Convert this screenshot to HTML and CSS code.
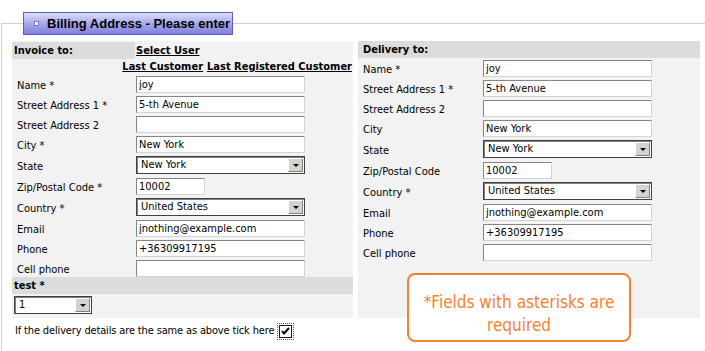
FILE: index.html
```html
<!DOCTYPE html>
<html lang="en">
<head>
<meta charset="utf-8">
<title>Billing Address</title>
<link rel="stylesheet" href="styles.css">
</head>
<body>
<fieldset class="billing">
  <legend class="legend"><span class="legend-icon"></span>Billing Address - Please enter</legend>
  <div class="columns">
    <section class="panel invoice">
      <div class="head-row">
        <span class="head-cell">Invoice to:</span>
        <a class="link" href="#">Select User</a>
      </div>
      <div class="links-row">
        <a class="link" href="#">Last Customer</a>
        <a class="link" href="#">Last Registered Customer</a>
      </div>
      <div class="form">
        <label class="lbl">Name *</label><span class="field"><input class="txt" value="joy"></span>
        <label class="lbl">Street Address 1 *</label><span class="field"><input class="txt" value="5-th Avenue"></span>
        <label class="lbl">Street Address 2</label><span class="field"><input class="txt" value=""></span>
        <label class="lbl">City *</label><span class="field"><input class="txt" value="New York"></span>
        <label class="lbl sel-row">State</label><span class="field sel-row"><span class="select"><span class="sel-text">New York</span><span class="sel-btn"><span class="arrow"></span></span></span></span>
        <label class="lbl">Zip/Postal Code *</label><span class="field"><input class="txt zip" value="10002"></span>
        <label class="lbl sel-row">Country *</label><span class="field sel-row"><span class="select"><span class="sel-text">United States</span><span class="sel-btn"><span class="arrow"></span></span></span></span>
        <label class="lbl">Email</label><span class="field"><input class="txt" value="jnothing@example.com"></span>
        <label class="lbl">Phone</label><span class="field"><input class="txt" value="+36309917195"></span>
        <label class="lbl last">Cell phone</label><span class="field last"><input class="txt" value=""></span>
      </div>
      <div class="test-head">test *</div>
      <div class="test-row">
        <span class="select small"><span class="sel-text">1</span><span class="sel-btn"><span class="arrow"></span></span></span>
      </div>
    </section>
    <section class="panel delivery">
      <div class="delivery-head">Delivery to:</div>
      <div class="form right">
        <label class="lbl">Name *</label><span class="field"><input class="txt" value="joy"></span>
        <label class="lbl">Street Address 1 *</label><span class="field"><input class="txt" value="5-th Avenue"></span>
        <label class="lbl">Street Address 2</label><span class="field"><input class="txt" value=""></span>
        <label class="lbl">City</label><span class="field"><input class="txt" value="New York"></span>
        <label class="lbl sel-row">State</label><span class="field sel-row"><span class="select"><span class="sel-text">New York</span><span class="sel-btn"><span class="arrow"></span></span></span></span>
        <label class="lbl">Zip/Postal Code</label><span class="field"><input class="txt zip" value="10002"></span>
        <label class="lbl sel-row">Country *</label><span class="field sel-row"><span class="select"><span class="sel-text">United States</span><span class="sel-btn"><span class="arrow"></span></span></span></span>
        <label class="lbl">Email</label><span class="field"><input class="txt" value="jnothing@example.com"></span>
        <label class="lbl">Phone</label><span class="field"><input class="txt" value="+36309917195"></span>
        <label class="lbl">Cell phone</label><span class="field"><input class="txt" value=""></span>
      </div>
      <div class="notice">*Fields with asterisks are required</div>
    </section>
  </div>
  <p class="same-row">If the delivery details are the same as above tick here <span class="checkbox"><svg width="9" height="9" viewBox="0 0 9 9"><path d="M1 4 L3 6.5 L8 1" fill="none" stroke="#000" stroke-width="2"/></svg></span></p>
</fieldset>
</body>
</html>
```
FILE: styles.css
```css
html, body {
  margin: 0;
  padding: 0;
  overflow: hidden;
  background: #fff;
}
body {
  font-family: "DejaVu Sans Condensed", "DejaVu Sans", sans-serif;
  font-size: 11px;
  color: #000;
}
.billing {
  margin: 12px 0 0 1px;
  padding: 6px 10px 16px 10px;
  border: 1px solid #cfcfcf;
  width: 720px;
  box-sizing: border-box;
}
.legend {
  margin-left: 11px;
  width: 210px;
  height: 23px;
  box-sizing: border-box;
  padding: 0 0 0 10px;
  border: 1px solid #5c5cc4;
  background: linear-gradient(#dedef8, #a8a8ec 50%, #8080dc);
  font-family: "Liberation Sans", Arial, sans-serif;
  font-weight: bold;
  font-size: 13px;
  line-height: 21px;
  display: flex;
  align-items: center;
}
.legend-icon {
  width: 3px;
  height: 3px;
  border: 1px solid #7c7cd8;
  background: #fff;
  margin-right: 8px;
}
.columns {
  display: grid;
  grid-template-columns: 341px 342px;
  column-gap: 5px;
  align-items: stretch;
}
.panel {
  background: #f2f2f2;
  position: relative;
  padding-bottom: 4px;
}
.head-row {
  display: flex;
  height: 17px;
  align-items: center;
  margin-top: 1px;
}
.head-cell {
  width: 121px;
  height: 17px;
  background: #dcdcdc;
  font-weight: bold;
  padding-left: 2px;
  line-height: 17px;
}
.link {
  color: #000;
  font-weight: bold;
  text-decoration: underline;
}
.head-row .link {
  margin-left: 1px;
}
.links-row {
  display: flex;
  justify-content: flex-end;
  gap: 4px;
  height: 16px;
  line-height: 16px;
  padding-right: 1px;
}
.form {
  display: grid;
  grid-template-columns: 124px 169px;
  grid-template-rows: 20px 20px 20px 20px 22px 20px 22px 20px 20px 18px;
}
.form.right {
  grid-template-columns: 125px 169px;
  grid-template-rows: 20px 20px 20px 20px 22px 20px 22px 20px 20px 20px;
}
.lbl {
  padding-left: 5px;
  line-height: 21px;
}
.field {
  padding-top: 1px;
}
.lbl.sel-row {
  line-height: 23px;
}
.txt {
  display: block;
  width: 169px;
  height: 17px;
  box-sizing: border-box;
  margin: 0;
  padding: 0 2px;
  border: 1px solid;
  border-color: #858585 #d6d3ce #d6d3ce #858585;
  background: #fff;
  font-family: inherit;
  font-size: 11px;
  color: #000;
  outline: none;
}
.txt.zip {
  width: 69px;
}
.select {
  display: flex;
  width: 169px;
  height: 18px;
  box-sizing: border-box;
  border: 1px solid #404040;
  box-shadow: inset 1px 1px 0 #808080;
  background: #fff;
  align-items: stretch;
}
.sel-text {
  flex: 1;
  padding-left: 4px;
  line-height: 16px;
}
.sel-btn {
  width: 15px;
  margin: 1px;
  box-sizing: border-box;
  background: #d6d3ce;
  border: 1px solid;
  border-color: #fff #808080 #808080 #fff;
  display: flex;
  align-items: center;
  justify-content: center;
}
.arrow {
  width: 0;
  height: 0;
  border-left: 3px solid transparent;
  border-right: 3px solid transparent;
  border-top: 3px solid #000;
  margin-top: 1px;
}
.select.small {
  width: 78px;
}
.test-head {
  height: 17px;
  line-height: 17px;
  background: #dcdcdc;
  font-weight: bold;
  padding-left: 2px;
}
.test-row {
  padding: 2px 0 0 2px;
}
.delivery-head {
  height: 17px;
  line-height: 17px;
  background: #dcdcdc;
  font-weight: bold;
  padding-left: 5px;
  margin-bottom: 1px;
}
.notice {
  position: absolute;
  left: 49px;
  top: 232px;
  width: 224px;
  height: 69px;
  box-sizing: border-box;
  border: 2px solid #f7812f;
  border-radius: 8px;
  color: #f7812f;
  font-size: 17px;
  line-height: 23px;
  text-align: center;
  padding: 16px 8px 0;
  background: #fff;
}
.same-row {
  margin: 6px 0 0 3px;
  display: flex;
  align-items: center;
  gap: 5px;
  line-height: 14px;
  letter-spacing: -0.15px;
}
.checkbox {
  width: 11px;
  height: 11px;
  border: 1px solid #1c1c1c;
  background: #fff;
  outline: 1px dotted #555;
  outline-offset: 1px;
  display: flex;
  align-items: center;
  justify-content: center;
}
```
